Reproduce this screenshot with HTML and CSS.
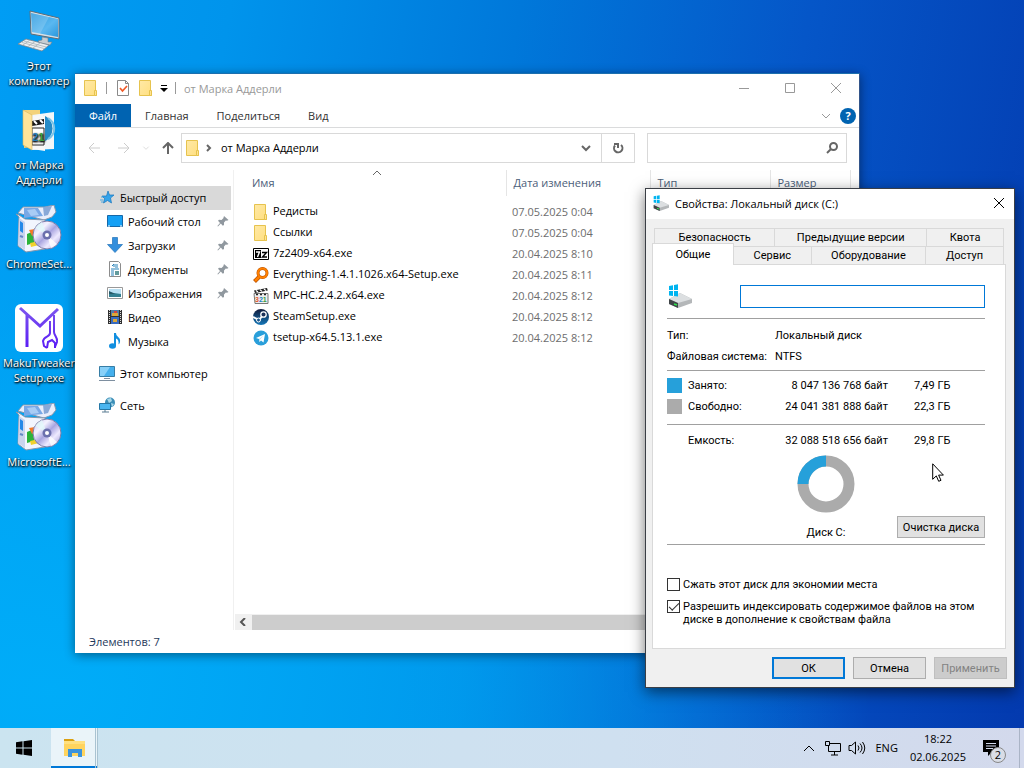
FILE: index.html
```html
<!DOCTYPE html>
<html lang="ru">
<head>
    <meta charset="UTF-8">
    <meta name="viewport" content="width=device-width, initial-scale=1.0">
    <title>Рабочий стол</title>
    <link rel="stylesheet" href="styles.css">
</head>
<body>
    <svg class="sprite" aria-hidden="true">
        <defs>
            <linearGradient id="screen" x1="0" y1="0" x2="1" y2="1">
                <stop offset="0" stop-color="#2295dd"/>
                <stop offset=".6" stop-color="#5ab8f0"/>
                <stop offset="1" stop-color="#2b98dd"/>
            </linearGradient>
            <linearGradient id="folderFill" x1="0" y1="0" x2="1" y2="1">
                <stop offset="0" stop-color="#ffe9a6"/>
                <stop offset="1" stop-color="#ffdf80"/>
            </linearGradient>
            <linearGradient id="disc" x1="0" y1="0" x2="1" y2="1">
                <stop offset="0" stop-color="#c5c2ee"/>
                <stop offset=".3" stop-color="#f4f2ff"/>
                <stop offset=".5" stop-color="#a9a5e0"/>
                <stop offset=".7" stop-color="#eeeaff"/>
                <stop offset="1" stop-color="#9a94d8"/>
            </linearGradient>
            <linearGradient id="maku" gradientUnits="userSpaceOnUse" x1="0" y1="4" x2="0" y2="44">
                <stop offset="0" stop-color="#7c55ee"/>
                <stop offset="1" stop-color="#5a1cf5"/>
            </linearGradient>
            <linearGradient id="steam" x1="0" y1="0" x2="0" y2="1">
                <stop offset="0" stop-color="#101a3a"/>
                <stop offset="1" stop-color="#1577b8"/>
            </linearGradient>
        </defs>
        <symbol id="folder" viewBox="0 0 16 16">
            <path d="M1.500.500h11v11h1v4h-12z" fill="url(#folderFill)" stroke="#e6c34e"/>
            <path d="M11.500 15v-4.500h2v5h-2z" fill="#ffe392" stroke="#e6c34e"/>
        </symbol>
        <symbol id="pin" viewBox="0 0 12 12">
            <path d="M7 1l4.500 4-1.500.8-1.200-.2-1.800 2L7 10 5.800 10.800 3.800 8.600 1 11.400.4 10.900 3 7.900 1 5.800 2 4.700l2.500.2L6.300 3.200z" fill="#90989f"/>
        </symbol>
        <symbol id="setup" viewBox="0 0 48 48">
            <path d="M3 8l5-6 22 0 9-2 2 7-4 5-8 3z" fill="#e9eefb" stroke="#8797ad"/>
            <path d="M9 3h14l5 8-19 2z" fill="#79a8e6"/>
            <path d="M12 5l8-1 4 6-8 1z" fill="#a8ccf5"/>
            <path d="M28 2l9-1-4 9-4 1z" fill="#89a9d8"/>
            <path d="M1 9l3 1 6 4 20 1v29l-19 3-8-6L4 12z" fill="#f2f5fe" stroke="#8797ad"/>
            <path d="M4 13l6 4v28l-7-5z" fill="#c9d4ee"/>
            <path d="M5 16l3 2v10l-3-2z" fill="#2388e8"/>
            <path d="M5 31l3 1" stroke="#6588c6" stroke-width="2"/>
            <path d="M12 29l7-3v12l-7 2z" fill="#2cb33b"/>
            <path d="M14 25l12-2v5l-9 3z" fill="#f37a28"/>
            <path d="M15 38l9-2v4l-8 2z" fill="#f2d12d"/>
            <circle cx="32" cy="30" r="14" fill="url(#disc)" stroke="#817fa8"/>
            <path d="M32 30L20 23a14 14 0 0 1 7-6z" fill="#e1fbfb" opacity=".7"/>
            <path d="M32 30l10 9a14 14 0 0 1-6 4z" fill="#fff" opacity=".8"/>
            <circle cx="32" cy="30" r="4.500" fill="#6b70ad"/>
            <circle cx="32" cy="30" r="2" fill="#fff"/>
        </symbol>
        <symbol id="drive" viewBox="0 0 24 24">
            <path d="M1 15l11-6 12 6v4l-14 5-9-4z" fill="#b4b7b9"/>
            <path d="M1 15l11-6 12 6-14 4z" fill="#dcdfe1"/>
            <path d="M1 15l9 4v5l-9-4z" fill="#3f4447"/>
            <path d="M6 20l3 1" stroke="#2ee24b" stroke-width="1.500"/>
            <path d="M1 2l4-.7V6H1zM6 1l4-.7V6H6zM1 7h4v5l-4-.6zM6 7h4v5.500L6 12z" fill="#00b4f0"/>
        </symbol>
    </svg>

    <main class="desktop">
        <ul class="shortcuts">
            <li class="shortcut">
                <svg viewBox="0 0 48 48">
                    <path d="M15 4l29 7v21l-28-5z" fill="#d8e0e6" stroke="#5f6d78"/>
                    <path d="M16 6l27 6v18l-26-5z" fill="url(#screen)"/>
                    <path d="M16 6l18 4-9 17-8-2z" fill="#fff" opacity=".18"/>
                    <path d="M27 30l6 1v4h4l-2 3-10-2-2-2 4-1z" fill="#c7ced3" stroke="#75828c" stroke-width=".6"/>
                    <path d="M11 32l23 6-7 6-24-7z" fill="#edf0f1" stroke="#78848d" stroke-width=".8"/>
                    <path d="M9 34l22 6M7 35.500l22 6M15 33l-7 5M20 34.500l-7 5M25 36l-7 5" stroke="#a8b1b7" stroke-width=".8"/>
                </svg>
                <span>Этот компьютер</span>
            </li>
            <li class="shortcut">
                <svg viewBox="0 0 48 48">
                    <path d="M9 4h16v35l-16 3z" fill="#f3d27a"/>
                    <path d="M17 9l22-3v37l-22 1z" fill="#f2f6f8"/>
                    <path d="M28 9a13 14 0 0 1 0 27z" fill="#258bc7"/>
                    <path d="M33 12a12 12 0 0 1 0 21" fill="none" stroke="#7cc3e6" stroke-width="2"/>
                    <path d="M17 10l13-1v36l-13-2z" fill="#f8f8f8"/>
                    <path d="M17 15l12-2v5l-12 2z" fill="#171717"/>
                    <path d="M19 15l3 3M25 14l3 3" stroke="#fff" stroke-width="2"/>
                    <path d="M17 22h12v17H17z" fill="#fff" stroke="#222"/>
                    <text x="17" y="35" font-size="11" font-family="Liberation Sans, sans-serif" font-weight="bold" fill="#257dbc">2<tspan fill="#3ca23c">1</tspan></text>
                    <path d="M8 4l9 5v35l-9-5z" fill="#ffe49a" stroke="#d6b65c" stroke-width=".6"/>
                </svg>
                <span>от Марка Аддерли</span>
            </li>
            <li class="shortcut">
                <svg><use href="#setup"/></svg>
                <span>ChromeSet...</span>
            </li>
            <li class="shortcut">
                <svg viewBox="0 0 48 48">
                    <rect width="48" height="48" rx="6" fill="#fff"/>
                    <path d="M5 4l20 18L43 5M12 11v32" fill="none" stroke="url(#maku)" stroke-width="3"/>
                    <path d="M39 11v17c0 4 4 5 3 10l-2 5M35 17v12c0 4-6 3-7 8l1 5 3 2" fill="none" stroke="url(#maku)" stroke-width="2"/>
                    <path d="M32 44l1-6 4-2 3 3v5" fill="none" stroke="url(#maku)" stroke-width="2"/>
                </svg>
                <span>MakuTweaker Setup.exe</span>
            </li>
            <li class="shortcut">
                <svg><use href="#setup"/></svg>
                <span>MicrosoftE...</span>
            </li>
        </ul>

        <section class="window explorer">
            <header class="explorer-title">
                <svg class="icon"><use href="#folder"/></svg>
                <span class="divider"></span>
                <svg class="icon" viewBox="0 0 16 16">
                    <path d="M2.500.500h8l3 3v12h-11z" fill="#fff" stroke="#8a8a8a"/>
                    <path d="M10.500.500v3h3" fill="none" stroke="#8a8a8a"/>
                    <path d="M5 8l2.500 3L12 6" fill="none" stroke="#f05a28" stroke-width="1.700"/>
                </svg>
                <svg class="icon"><use href="#folder"/></svg>
                <svg class="quick-arrow" viewBox="0 0 8 8"><path d="M1 1.500h6" stroke="#000"/><path d="M0 4h8L4 8z"/></svg>
                <span class="divider"></span>
                <span class="explorer-name">от Марка Аддерли</span>
                <div class="window-controls">
                    <button aria-label="Свернуть"><svg viewBox="0 0 10 10"><path d="M0 5.500h10"/></svg></button>
                    <button aria-label="Развернуть"><svg viewBox="0 0 10 10"><path d="M.5.500h9v9h-9z"/></svg></button>
                    <button aria-label="Закрыть"><svg viewBox="0 0 10 10"><path d="M0 0l10 10M10 0L0 10"/></svg></button>
                </div>
            </header>
            <nav class="ribbon">
                <button class="file-tab">Файл</button>
                <button>Главная</button>
                <button>Поделиться</button>
                <button>Вид</button>
                <svg class="chevron ribbon-toggle" viewBox="0 0 10 10"><path d="M1 3l4 4 4-4"/></svg>
                <button class="help" aria-label="Справка">?</button>
            </nav>
            <div class="address-row">
                <div class="history">
                    <svg viewBox="0 0 12 12" class="faded"><path d="M12 6H1M6 1L1 6l5 5"/></svg>
                    <svg viewBox="0 0 12 12" class="faded"><path d="M0 6h11M6 1l5 5-5 5"/></svg>
                    <svg viewBox="0 0 12 12" class="faded small"><path d="M2 4l4 4 4-4"/></svg>
                    <svg viewBox="0 0 12 12"><path d="M6 12V1M1 6l5-5 5 5"/></svg>
                </div>
                <div class="address">
                    <svg class="icon"><use href="#folder"/></svg>
                    <svg class="crumb-arrow" viewBox="0 0 8 8"><path d="M2 1l3 3-3 3"/></svg>
                    <span class="crumb">от Марка Аддерли</span>
                    <svg class="chevron dark" viewBox="0 0 10 10"><path d="M1 3l4 4 4-4"/></svg>
                    <button class="refresh" aria-label="Обновить">
                        <svg viewBox="0 0 12 12"><path d="M9 3A4.200 4.200 0 1 1 3 3.500M2 2h4v4"/></svg>
                    </button>
                </div>
                <div class="search">
                    <input type="text" aria-label="Поиск">
                    <svg viewBox="0 0 12 12"><circle cx="7.500" cy="4.500" r="3.500"/><path d="M5 7L1 11"/></svg>
                </div>
            </div>
            <div class="explorer-body">
                <aside class="sidebar">
                    <a href="#" class="selected">
                        <svg class="icon" viewBox="0 0 16 16"><path d="M9 2l1.500 4H15l-3.500 3 1 5L8.500 11.500 4.500 14l1-4.500L3 7h4.500z" fill="#35a4ea" stroke="#1976bd" stroke-width=".7"/><path d="M2 8h2M1 11h3M2 13h2" stroke="#4da9df"/></svg>
                        Быстрый доступ
                    </a>
                    <a href="#" class="nested">
                        <svg class="icon" viewBox="0 0 16 16"><path d="M.5 2.500h15v11H.5z" fill="#14a0f5" stroke="#1668a8"/><path d="M1 13h2M13 13h2" stroke="#fff"/></svg>
                        Рабочий стол
                        <svg class="pin"><use href="#pin"/></svg>
                    </a>
                    <a href="#" class="nested">
                        <svg class="icon" viewBox="0 0 16 16"><path d="M5.500.500h5v7h5L8 15.500.500 7.500h5z" fill="#338fdd" stroke="#2373b9" stroke-width=".7"/></svg>
                        Загрузки
                        <svg class="pin"><use href="#pin"/></svg>
                    </a>
                    <a href="#" class="nested">
                        <svg class="icon" viewBox="0 0 16 16"><path d="M2.500.500h9l2 2v13h-11z" fill="#fff" stroke="#8c8c8c"/><path d="M5 5l2-2v3M8 4h3M8 6h3M4 8h8M4 10h3M4 12h3M4 14h3" stroke="#2681b8" fill="none"/><path d="M8 10h4v4H8z" fill="#639b9d"/></svg>
                        Документы
                        <svg class="pin"><use href="#pin"/></svg>
                    </a>
                    <a href="#" class="nested">
                        <svg class="icon" viewBox="0 0 16 16"><path d="M.5 2.500h15v11H.5z" fill="#fff" stroke="#999"/><path d="M2 4h12v8H2z" fill="#b8dff2"/><path d="M2 7l5 1 7 1v3H2z" fill="#337f91"/><path d="M2 6l6 3H2z" fill="#285866"/></svg>
                        Изображения
                        <svg class="pin"><use href="#pin"/></svg>
                    </a>
                    <a href="#" class="nested">
                        <svg class="icon" viewBox="0 0 16 16"><path d="M1 1h14v14H1z" fill="#303030"/><path d="M4 1h8v6H4z" fill="#507da9"/><path d="M4 8h8v7H4z" fill="#386bc1"/><path d="M5 4h6v3H5zM6 10h4v3H6z" fill="#dca83a"/><path d="M7 2h3v2H7z" fill="#d24343"/><path d="M2.500 1v14M13.500 1v14" stroke="#ddd" stroke-dasharray="1"/></svg>
                        Видео
                    </a>
                    <a href="#" class="nested">
                        <svg class="icon" viewBox="0 0 16 16"><ellipse cx="5.500" cy="13" rx="3.500" ry="2.700" fill="#118fe0"/><path d="M7 0h2c0 4 5 4 4 9-.3 1.500-1 2-1.500 2.500C12 8 11 6 9 5.500V13H7z" fill="#118fe0"/></svg>
                        Музыка
                    </a>
                    <a href="#" class="root">
                        <svg class="icon" viewBox="0 0 16 16"><path d="M.5 1.500h15v10H.5z" fill="#45b0ed" stroke="#377da5"/><path d="M1 2h10L5 11H1z" fill="#88d0f8"/><path d="M5 13.500h6M0 15.500h16" stroke="#7e8fa0"/></svg>
                        Этот компьютер
                    </a>
                    <a href="#" class="root">
                        <svg class="icon" viewBox="0 0 16 16"><circle cx="11" cy="5.500" r="5" fill="#3c8eb7"/><path d="M8 2l4-1 1 3-3 2zM12 6l3 1-2 3z" fill="#a8d8e9"/><path d="M.5 6.500h11v6H.5z" fill="#49b5f0" stroke="#2477a6"/><path d="M3 15h7M6 13v2" stroke="#597a91"/></svg>
                        Сеть
                    </a>
                </aside>
                <div class="files">
                    <table class="file-table">
                        <colgroup><col class="col-name"><col class="col-date"><col class="col-type"><col class="col-size"><col></colgroup>
                        <thead>
                            <tr>
                                <th>Имя<svg class="sort" viewBox="0 0 10 6"><path d="M1 5l4-4 4 4"/></svg></th>
                                <th>Дата изменения</th>
                                <th>Тип</th>
                                <th>Размер</th>
                                <td></td>
                            </tr>
                        </thead>
                        <tbody>
                            <tr>
                                <td><svg class="icon"><use href="#folder"/></svg>Редисты</td>
                                <td>07.05.2025 0:04</td>
                            </tr>
                            <tr>
                                <td><svg class="icon"><use href="#folder"/></svg>Ссылки</td>
                                <td>07.05.2025 0:04</td>
                            </tr>
                            <tr>
                                <td><svg class="icon" viewBox="0 0 16 16"><path d="M.5 2.500h15v11H.5z" fill="#fff" stroke="#000"/><path d="M2 4h6v8H2z"/><path d="M3 6h3.500L4.500 11" fill="none" stroke="#fff" stroke-width="1.400"/><path d="M9 6.500h4.500L9.500 11h4.500" fill="none" stroke="#000" stroke-width="1.400"/></svg>7z2409-x64.exe</td>
                                <td>20.04.2025 8:10</td>
                            </tr>
                            <tr>
                                <td><svg class="icon" viewBox="0 0 16 16"><path d="M6 10l-4.500 4.500" stroke="#b95000" stroke-width="4"/><circle cx="9.500" cy="6" r="4.500" fill="#fff" stroke="#b95000" stroke-width="3"/><circle cx="9.500" cy="6" r="4.500" fill="none" stroke="#ff8100" stroke-width="2"/><path d="M6 10l-4 4" stroke="#ff8100" stroke-width="2.500"/></svg>Everything-1.4.1.1026.x64-Setup.exe</td>
                                <td>20.04.2025 8:11</td>
                            </tr>
                            <tr>
                                <td><svg class="icon" viewBox="0 0 16 16"><path d="M1 2.500L14 0l.8 2.500L2 5z" fill="#222"/><path d="M3 2.500l2 1.500M7 1.700l2 1.700M11 1l2 1.600" stroke="#fff" stroke-width="1.200"/><path d="M1 5.500h14v10H2z" fill="#eee" stroke="#777"/><path d="M3 6.500h2M7 6.500h2M11 6.500h2" stroke="#222" stroke-width="1.500"/><text x="2" y="14" font-size="7" font-family="Liberation Sans, sans-serif" font-weight="bold" fill="#e2572c">3<tspan fill="#2384c6">2</tspan><tspan fill="#3da03d">1</tspan></text></svg>MPC-HC.2.4.2.x64.exe</td>
                                <td>20.04.2025 8:12</td>
                            </tr>
                            <tr>
                                <td><svg class="icon" viewBox="0 0 16 16"><circle cx="8" cy="8" r="8" fill="url(#steam)"/><path d="M0 8l6 3 4-5" fill="none" stroke="#fff" stroke-width="2"/><circle cx="10.500" cy="5.500" r="2.700" fill="#1c3158" stroke="#fff" stroke-width="1.300"/><circle cx="5.500" cy="11" r="2" fill="#1b568b" stroke="#fff"/></svg>SteamSetup.exe</td>
                                <td>20.04.2025 8:12</td>
                            </tr>
                            <tr>
                                <td><svg class="icon" viewBox="0 0 16 16"><circle cx="8" cy="8" r="7.500" fill="#2a9fda"/><path d="M3 8l9-4-1.500 8.500L8 10.500 6.500 12 6 9z" fill="#fff"/><path d="M6 9l4.500-3.500L7 9.500 6.500 12z" fill="#b9dcec"/></svg>tsetup-x64.5.13.1.exe</td>
                                <td>20.04.2025 8:12</td>
                            </tr>
                        </tbody>
                    </table>
                    <div class="scrollbar">
                        <svg viewBox="0 0 8 8"><path d="M6 0L2 4l4 4"/></svg>
                        <span class="thumb"></span>
                    </div>
                </div>
            </div>
            <footer class="status">Элементов: 7</footer>
        </section>

        <section class="window dialog">
            <header class="dialog-title">
                <svg class="icon"><use href="#drive"/></svg>
                <span>Свойства: Локальный диск (C:)</span>
                <button aria-label="Закрыть"><svg viewBox="0 0 10 10"><path d="M0 0l10 10M10 0L0 10"/></svg></button>
            </header>
            <div class="dialog-body">
                <div class="tabs tabs-back">
                    <button>Безопасность</button>
                    <button>Предыдущие версии</button>
                    <button>Квота</button>
                </div>
                <div class="tabs tabs-front">
                    <button class="active">Общие</button>
                    <button>Сервис</button>
                    <button>Оборудование</button>
                    <button>Доступ</button>
                </div>
                <div class="panel">
                    <div class="label-row">
                        <svg class="drive-icon"><use href="#drive"/></svg>
                        <input type="text" aria-label="Метка тома">
                    </div>
                    <hr>
                    <dl class="facts">
                        <dt>Тип:</dt>
                        <dd>Локальный диск</dd>
                        <dt>Файловая система:</dt>
                        <dd>NTFS</dd>
                    </dl>
                    <hr>
                    <table class="space">
                        <tr>
                            <td class="key"><span class="swatch used"></span></td>
                            <th>Занято:</th>
                            <td class="bytes">8 047 136 768 байт</td>
                            <td class="size">7,49 ГБ</td>
                        </tr>
                        <tr>
                            <td class="key"><span class="swatch free"></span></td>
                            <th>Свободно:</th>
                            <td class="bytes">24 041 381 888 байт</td>
                            <td class="size">22,3 ГБ</td>
                        </tr>
                    </table>
                    <hr>
                    <table class="space total">
                        <tr>
                            <td class="key"></td>
                            <th>Емкость:</th>
                            <td class="bytes">32 088 518 656 байт</td>
                            <td class="size">29,8 ГБ</td>
                        </tr>
                    </table>
                    <div class="disk">
                        <div class="disk-chart">
                            <svg viewBox="0 0 58 58">
                                <circle cx="29" cy="29" r="23" fill="none" stroke="#ababab" stroke-width="11"/>
                                <path d="M6 29A23 23 0 0 1 29 6" fill="none" stroke="#26a0da" stroke-width="11"/>
                            </svg>
                            <span>Диск C:</span>
                        </div>
                        <button class="btn cleanup">Очистка диска</button>
                    </div>
                    <hr>
                    <div class="options">
                        <label><input type="checkbox"><span>Сжать этот диск для экономии места</span></label>
                        <label><input type="checkbox" checked><span>Разрешить индексировать содержимое файлов на этом диске в дополнение к свойствам файла</span></label>
                    </div>
                </div>
                <div class="actions">
                    <button class="btn primary">ОК</button>
                    <button class="btn">Отмена</button>
                    <button class="btn" disabled>Применить</button>
                </div>
            </div>
        </section>

        <svg class="cursor" viewBox="0 0 12 19"><path d="M.7.800v15.500l3.600-3.400 2.400 5.400 2.300-1-2.400-5.200h4.800z" fill="#fff" stroke="#000"/></svg>
    </main>

    <footer class="taskbar">
        <button class="start" aria-label="Пуск">
            <svg viewBox="0 0 16 16"><path d="M0 2.200L6.500 1.300v6.200H0zM7.500 1.200L16 0v7.500H7.500zM0 8.500h6.500v6.200L0 13.800zM7.500 8.500H16V16l-8.500-1.200z"/></svg>
        </button>
        <button class="task" aria-label="Проводник">
            <svg viewBox="0 0 22 20">
                <path d="M0 1h9l2 2H0z" fill="#dba011"/>
                <path d="M0 3h21v15H0z" fill="#ffd45e"/>
                <path d="M0 3h21v3H0z" fill="#ffe07f"/>
                <path d="M4 19v-8h14v8h-4v-4H8v4z" fill="#3b93dc"/>
            </svg>
        </button>
        <div class="tray">
            <svg class="tray-up" viewBox="0 0 12 12"><path d="M1 9l5-5 5 5"/></svg>
            <svg class="tray-net" viewBox="0 0 16 16"><path d="M4.500 3.500h11v8H3.500V6M9.500 12v3M6 15h7M.5 1.500h4v4h-4z"/></svg>
            <svg class="tray-vol" viewBox="0 0 18 16"><path d="M1 5.500h2.500L7.500 2v12L3.500 10.500H1zM10 5.500q2 2.500 0 5M12 3.500q4 4.500 0 9M14.500 2q4.500 6 0 12"/></svg>
            <span class="lang">ENG</span>
            <time class="clock">18:22<br>02.06.2025</time>
            <div class="notify">
                <svg viewBox="0 0 16 16"><path d="M0 0h16v12H9l-4 4v-4H0z"/><path d="M3 3.500h10M3 6h10M3 8.500h7" stroke="#d2d9ec"/></svg>
                <span class="badge">2</span>
            </div>
        </div>
    </footer>
</body>
</html>
```
FILE: styles.css
```css
* {
    box-sizing: border-box;
}
body {
    margin: 0;
    height: 100vh;
    display: flex;
    flex-direction: column;
    overflow: hidden;
    font-family: "Open Sans", "Noto Sans", sans-serif;
    font-size: 11px;
    color: #000;
    background: linear-gradient(100deg, #009df4 0%, #0094ec 20%, #0078da 45%, #0556c8 70%, #0339ae 100%);
}
button, input {
    font: inherit;
    color: inherit;
}
button {
    padding: 0;
    border: none;
    background: none;
}
svg {
    display: block;
    flex: none;
}
.sprite {
    position: absolute;
    width: 0;
    height: 0;
}
.icon {
    width: 16px;
    height: 16px;
}

/* desktop */
.desktop {
    position: relative;
    flex: 1;
    min-height: 0;
    background: radial-gradient(ellipse 80% 70% at 5% 95%, rgba(0, 176, 250, 0.85), rgba(0, 170, 246, 0.7) 50%, rgba(0, 150, 240, 0));
}
.shortcuts {
    list-style: none;
    margin: 0;
    padding: 7px 0 0 1px;
    width: 77px;
}
.shortcut {
    display: flex;
    flex-direction: column;
    align-items: center;
    height: 99px;
    line-height: 15px;
    text-align: center;
    color: #fff;
    text-shadow: 0 1px 2px #000, 1px 1px 2px #000;
}
.shortcut svg {
    width: 48px;
    height: 48px;
    margin-bottom: 3px;
}

.window {
    position: absolute;
    display: flex;
    flex-direction: column;
    background: #fff;
}

/* explorer */
.explorer {
    top: 73px;
    right: 164px;
    bottom: 75px;
    left: 75px;
    border-top: 1px solid #1c6fae;
    border-right: 1px solid #33558a;
    box-shadow: 0 2px 10px rgba(0, 0, 0, 0.45);
}
.explorer-title {
    display: flex;
    align-items: center;
    height: 30px;
    padding: 0 0 2px 8px;
}
.explorer-title .divider {
    width: 1px;
    height: 12px;
    margin: 0 8px 0 7px;
    background: #999;
}
.explorer-title .icon + .icon {
    margin: 0 6px 0 7px;
}
.quick-arrow {
    width: 8px;
    height: 8px;
}
.explorer-name {
    color: #999;
}
.window-controls {
    display: flex;
    margin-left: auto;
}
.window-controls button {
    display: flex;
    justify-content: center;
    width: 46px;
}
.window-controls svg {
    width: 10px;
    height: 10px;
    fill: none;
    stroke: #999;
}
.ribbon {
    display: flex;
    align-items: stretch;
    height: 24px;
    padding-right: 3px;
    border-bottom: 1px solid #dadbdc;
    color: #333;
}
.ribbon button {
    margin-right: 28px;
}
.ribbon .file-tab {
    width: 56px;
    margin-right: 14px;
    background: #0063b1;
    color: #fff;
}
.chevron {
    width: 10px;
    height: 10px;
    fill: none;
    stroke: #999;
}
.chevron.dark {
    stroke: #666;
    stroke-width: 2px;
}
.ribbon-toggle {
    align-self: center;
    margin: 0 9px 0 auto;
}
.ribbon .help {
    align-self: center;
    width: 16px;
    height: 16px;
    margin: 0;
    border-radius: 8px;
    background: #0063b1;
    color: #fff;
    font-weight: bold;
    line-height: 16px;
}
.address-row {
    display: grid;
    grid-template-columns: 94px 226fr 101fr;
    height: 42px;
    padding: 5px 12px 7px;
}
.history {
    display: flex;
    align-items: center;
    gap: 18px;
    padding-left: 1px;
}
.history svg {
    width: 12px;
    height: 12px;
    fill: none;
    stroke: #666;
    stroke-width: 2px;
}
.history .faded {
    stroke: #ccc;
    stroke-width: 1px;
}
.history .small {
    width: 8px;
    margin: 0 -6px;
}
.address, .search {
    display: flex;
    align-items: center;
    border: 1px solid #d9d9d9;
}
.address {
    margin-right: 6px;
    padding-left: 3px;
}
.crumb-arrow {
    width: 8px;
    height: 8px;
    margin: 0 8px 0 4px;
    fill: none;
    stroke: #666;
    stroke-width: 2px;
}
.crumb {
    flex: 1;
    padding-bottom: 2px;
}
.refresh {
    display: flex;
    align-items: center;
    justify-content: center;
    align-self: stretch;
    width: 33px;
    margin-left: 10px;
    border-left: 1px solid #d9d9d9;
}
.refresh svg, .search svg {
    width: 12px;
    height: 12px;
    fill: none;
    stroke: #666;
    stroke-width: 2px;
}
.search {
    margin-left: 6px;
    padding-right: 8px;
}
.search input {
    flex: 1;
    min-width: 0;
    height: 26px;
    border: none;
    outline: none;
}
.explorer-body {
    display: flex;
    flex: 1;
    min-height: 0;
}
.sidebar {
    width: 159px;
    padding: 16px 2px 0 0;
    border-right: 1px solid #f0f0f0;
}
.sidebar a {
    display: flex;
    align-items: center;
    gap: 5px;
    height: 24px;
    padding: 0 0 2px 24px;
    color: inherit;
    text-decoration: none;
}
.sidebar .selected {
    background: #d9d9d9;
}
.sidebar .nested {
    padding: 0 2px 2px 32px;
}
.sidebar .root {
    margin-top: 8px;
}
.pin {
    width: 12px;
    height: 12px;
    margin-left: auto;
}
.files {
    display: flex;
    flex: 1;
    flex-direction: column;
    min-width: 0;
}
.file-table {
    width: 100%;
    table-layout: fixed;
    border-collapse: collapse;
}
.col-name {
    width: 272px;
}
.col-date {
    width: 144px;
}
.col-type {
    width: 120px;
}
.col-size {
    width: 80px;
}
.file-table th {
    position: relative;
    height: 26px;
    padding: 0 0 2px 7px;
    border-right: 1px solid #e5e5e5;
    color: #4c607a;
    font-weight: normal;
    text-align: left;
}
.file-table th:first-child {
    padding-left: 18px;
}
.sort {
    position: absolute;
    top: 0;
    left: 138px;
    width: 10px;
    height: 6px;
    fill: none;
    stroke: #666;
}
.file-table tbody::before {
    content: "";
    display: block;
    height: 5px;
}
.file-table tbody td {
    height: 21px;
    padding: 0 0 0 6px;
    color: #6d6d6d;
}
.file-table tbody td:first-child {
    padding-left: 19px;
    color: #000;
}
.file-table td .icon {
    display: inline-block;
    margin-right: 4px;
    vertical-align: middle;
}
.scrollbar {
    display: flex;
    align-items: center;
    height: 16px;
    margin: auto 0 0 1px;
    background: #f0f0f0;
}
.scrollbar svg {
    width: 8px;
    height: 8px;
    margin: 0 5px 0 4px;
    fill: none;
    stroke: #555;
    stroke-width: 2px;
}
.thumb {
    flex: 1;
    height: 15px;
    background: #cdcdcd;
}
.status {
    height: 23px;
    padding-left: 14px;
    line-height: 23px;
    color: #1e395b;
}

/* drive properties */
.dialog {
    top: 188px;
    right: 9px;
    left: 645px;
    border: 1px solid #3b3f46;
    box-shadow: 0 4px 14px rgba(0, 0, 0, 0.55);
}
.dialog-title {
    display: flex;
    align-items: center;
    gap: 6px;
    height: 30px;
    padding: 0 10px 2px 7px;
}
.dialog-title button {
    margin-left: auto;
}
.dialog-title button svg {
    width: 10px;
    height: 10px;
    fill: none;
    stroke: #000;
}
.dialog-body {
    padding: 9px 8px 8px 6px;
    background: #f0f0f0;
    font-family: Roboto, "Liberation Sans", sans-serif;
}
.tabs {
    display: flex;
    padding: 0 2px;
}
.tabs button {
    height: 18px;
    border: 1px solid #d9d9d9;
    border-width: 1px 1px 0 0;
}
.tabs-back button:first-child {
    border-left-width: 1px;
}
.tabs-back button {
    flex: 77;
}
.tabs-back button:nth-child(1) {
    flex: 121;
}
.tabs-back button:nth-child(2) {
    flex: 153;
}
.tabs-front {
    padding-left: 0;
}
.tabs-front button {
    flex: 78;
}
.tabs-front button:nth-child(3) {
    flex: 115;
}
.tabs-front .active {
    position: relative;
    flex: 81;
    height: 22px;
    margin: -3px 0 -1px;
    border-left-width: 1px;
    background: #fff;
}
.panel {
    padding: 19px 20px 13px 14px;
    border: 1px solid #d9d9d9;
    background: #fff;
}
.label-row {
    display: flex;
    align-items: center;
    margin-bottom: 10px;
}
.drive-icon {
    width: 24px;
    height: 24px;
    margin: 0 48px 0 1px;
}
.label-row input {
    flex: 1;
    min-width: 0;
    height: 23px;
    padding: 0 4px;
    border: 1px solid #0078d7;
    outline: none;
}
.panel hr {
    height: 1px;
    margin: 0;
    border: none;
    background: #a0a0a0;
}
.facts {
    display: grid;
    grid-template-columns: 108px 1fr;
    margin: 0;
    padding: 6px 0 3px;
    line-height: 21px;
}
.facts dd {
    margin: 0;
}
.space {
    width: 100%;
    margin: 4px 0 7px;
    border-collapse: collapse;
}
.space.total {
    margin: 5px 0 4px;
}
.space td, .space th {
    height: 21px;
    padding: 0;
    font-weight: normal;
    text-align: left;
}
.space .key {
    width: 21px;
}
.space .bytes {
    text-align: right;
}
.space .size {
    width: 97px;
    padding-left: 26px;
}
.swatch {
    display: block;
    width: 15px;
    height: 15px;
}
.used {
    background: #26a0da;
}
.free {
    background: #ababab;
}
.disk {
    display: grid;
    grid-template-columns: 1fr 88px;
    align-items: end;
    padding-bottom: 6px;
}
.disk-chart {
    display: flex;
    flex-direction: column;
    align-items: center;
    gap: 14px;
    margin-left: 88px;
    line-height: 11px;
}
.disk-chart svg {
    width: 58px;
    height: 58px;
}
.btn {
    height: 22px;
    border: 1px solid #adadad;
    background: #e1e1e1;
}
.options {
    padding-top: 33px;
}
.options label {
    display: flex;
    gap: 3px;
    margin-bottom: 9px;
    line-height: 13px;
}
.options input {
    flex: none;
    appearance: none;
    width: 13px;
    height: 13px;
    margin: 0;
    border: 1px solid #333;
    background: #fff;
}
.options input:checked::after {
    content: "";
    display: block;
    width: 9px;
    height: 4px;
    margin: 2px 1px;
    border: solid #333;
    border-width: 0 0 1px 1px;
    transform: rotate(-45deg);
}
.actions {
    display: flex;
    justify-content: flex-end;
    gap: 8px;
    margin: 8px -1px 0 0;
}
.actions .btn {
    width: 73px;
}
.actions .primary {
    border: 2px solid #0078d7;
}
.actions .btn:disabled {
    border-color: #bfbfbf;
    background: #ccc;
    color: #838383;
}

.cursor {
    position: absolute;
    top: 463px;
    left: 932px;
    width: 12px;
    height: 19px;
}

/* taskbar */
.taskbar {
    display: flex;
    align-items: stretch;
    height: 40px;
    background: linear-gradient(90deg, #cbe4f0, #cfe0f0 60%, #d3d9ec);
}
.start {
    display: flex;
    align-items: center;
    justify-content: center;
    width: 48px;
    margin-right: 3px;
}
.start svg {
    width: 16px;
    height: 16px;
}
.task {
    display: flex;
    align-items: center;
    justify-content: center;
    width: 47px;
    padding-left: 3px;
    border-right: 3px double #a9c3d1;
    background: linear-gradient(#eaf4f9 38px, #0078d7 38px);
}
.task svg {
    width: 22px;
    height: 20px;
}
.tray {
    display: flex;
    align-items: center;
    margin-left: auto;
    padding-right: 4px;
}
.tray > svg {
    fill: none;
    stroke: #000;
}
.tray-up {
    width: 12px;
    height: 12px;
}
.tray-net {
    width: 16px;
    height: 16px;
    margin: 0 7px 0 10px;
}
.tray-vol {
    width: 18px;
    height: 16px;
}
.lang {
    margin-left: 9px;
    padding-bottom: 2px;
}
.clock {
    margin: 0 16px 0 12px;
    line-height: 18px;
    text-align: center;
}
.notify {
    position: relative;
    align-self: stretch;
    width: 38px;
    border-right: 1px solid #aab4c6;
}
.notify svg {
    width: 16px;
    height: 16px;
    margin: 12px 0 0 1px;
}
.badge {
    position: absolute;
    top: 19px;
    left: 8px;
    width: 16px;
    height: 16px;
    border: 1px solid #888;
    border-radius: 8px;
    background: #d9dde6;
    line-height: 14px;
    text-align: center;
}
```
